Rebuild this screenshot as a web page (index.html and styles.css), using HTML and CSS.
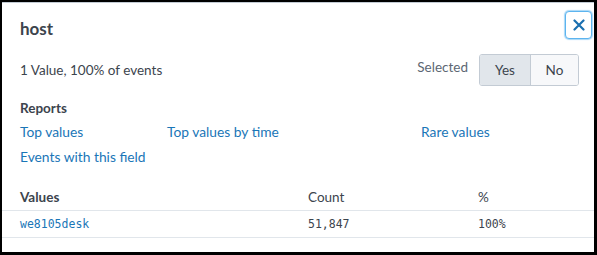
FILE: index.html
```html
<!DOCTYPE html>
<html>
<head>
<meta charset="utf-8">
<link rel="stylesheet" href="styles.css">
</head>
<body>
<div class="panel">
  <div class="head">
    <h1 class="title">host</h1>
    <button class="close" aria-label="Close">
      <svg width="12" height="12" viewBox="0 0 12 12"><path d="M1.5 1.5 L10.5 10.5 M10.5 1.5 L1.5 10.5" stroke="#1a6fb0" stroke-width="2.2" stroke-linecap="round"/></svg>
    </button>
  </div>
  <div class="summary">
    <div class="stat">1 Value, 100% of events</div>
    <div class="selected">
      <span class="sel-label">Selected</span>
      <div class="toggle">
        <span class="opt on">Yes</span>
        <span class="opt">No</span>
      </div>
    </div>
  </div>
  <div class="reports">
    <div class="rep-title">Reports</div>
    <div class="links">
      <a class="link c1">Top values</a>
      <a class="link c2">Top values by time</a>
      <a class="link c3">Rare values</a>
    </div>
    <div class="links">
      <a class="link c1">Events with this field</a>
    </div>
  </div>
  <div class="table">
    <div class="row th">
      <span class="col v">Values</span>
      <span class="col n">Count</span>
      <span class="col p">%</span>
    </div>
    <div class="row td">
      <span class="col v mono blue">we8105desk</span>
      <span class="col n mono">51,847</span>
      <span class="col p mono">100%</span>
    </div>
  </div>
</div>
</body>
</html>
```
FILE: styles.css
```css
html, body { margin: 0; padding: 0; }
body {
  background: #000;
  width: 597px;
  height: 255px;
  overflow: hidden;
  font-family: Lato, "Open Sans", sans-serif;
  color: #3c444d;
}
.panel {
  margin: 2px 3px 0 2px;
  height: 250px;
  background: #fff;
  border-top: 1px solid #c3cbd4;
  box-sizing: border-box;
}
.head {
  display: flex;
  justify-content: space-between;
  align-items: flex-start;
  padding: 7px 2px 0 18px;
  height: 34px;
}
.title {
  margin: 9px 0 0 0;
  font-size: 17px;
  font-weight: 700;
  line-height: 20px;
  color: #3c444d;
}
.close {
  width: 27px;
  height: 28px;
  border: 1px solid #5cb4ef;
  box-shadow: 0 0 1px 1px #a8d7f7;
  border-radius: 4px;
  background: #fff;
  display: flex;
  align-items: center;
  justify-content: center;
  padding: 0;
  margin-top: 1px;
}
.summary {
  display: flex;
  justify-content: space-between;
  align-items: center;
  padding: 0 15px 0 18px;
  margin-top: 10px;
  height: 32px;
}
.stat { font-size: 13.5px; margin-top: 0; }
.selected { display: flex; align-items: center; }
.sel-label { font-size: 13.5px; color: #5c6773; margin-right: 11px; margin-top: -6px; }
.toggle {
  display: flex;
  border: 1px solid #c3cbd4;
  border-radius: 3px;
  overflow: hidden;
  height: 30px;
}
.opt {
  width: 47px;
  display: flex;
  align-items: center;
  justify-content: center;
  font-size: 13.5px;
  background: #f7f8fa;
  color: #3c444d;
}
.opt.on { background: #e1e6eb; border-right: 1px solid #c3cbd4; width: 50px; }
.reports { padding: 0 0 0 18px; margin-top: 13px; }
.rep-title { font-size: 13.5px; font-weight: 700; line-height: 18px; }
.links { display: flex; margin-top: 5px; line-height: 20px; }
.links + .links { margin-top: 5px; }
.link { font-size: 13.8px; color: #1a76b7; text-decoration: none; }
.c1 { width: 147px; }
.c2 { width: 254px; }
.table { margin-top: 16px; }
.row { display: flex; padding-left: 18px; box-sizing: border-box; }
.th { height: 28px; align-items: center; border-bottom: 1px solid #e1e6eb; }
.td { height: 27px; align-items: center; border-bottom: 1px solid #e1e6eb; }
.col { font-size: 13.5px; }
.th .v { font-weight: 700; }
.v { width: 288px; }
.n { width: 170px; }
.mono { font-family: "DejaVu Sans Mono", monospace; font-size: 11.5px; color: #3c444d; }
.blue { color: #1a76b7; }
```
